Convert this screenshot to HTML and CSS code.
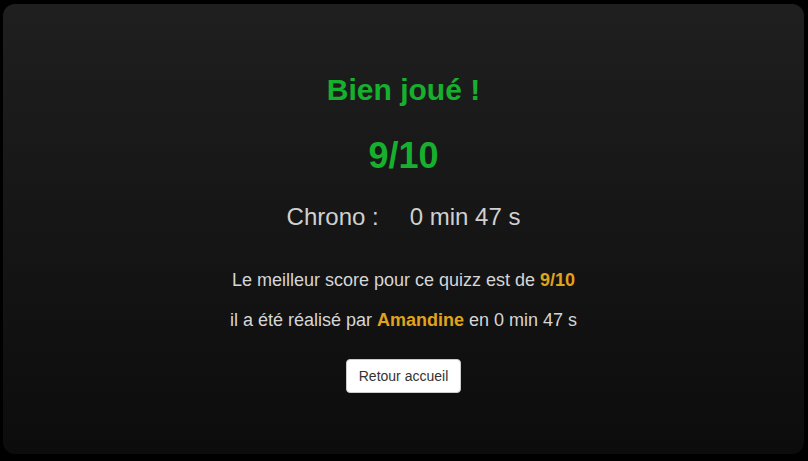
FILE: index.html
```html
<!DOCTYPE html>
<html lang="fr">
<head>
<meta charset="utf-8">
<title>Résultat</title>
<link rel="stylesheet" href="styles.css">
</head>
<body>
<main class="card">
  <h1 class="title">Bien joué !</h1>
  <p class="score">9/10</p>
  <p class="chrono"><span class="chrono-label">Chrono :</span><span>0 min 47 s</span></p>
  <p class="info">Le meilleur score pour ce quizz est de <strong class="hl">9/10</strong></p>
  <p class="info">il a été réalisé par <strong class="hl">Amandine</strong> en 0 min 47 s</p>
  <button class="btn" type="button">Retour accueil</button>
</main>
</body>
</html>
```
FILE: styles.css
```css
html, body {
  margin: 0;
  background: #000;
}
body {
  padding: 4px 4px 7px 3px;
  font-family: "Liberation Sans", Arial, sans-serif;
}
.card {
  height: 450px;
  box-sizing: border-box;
  border-radius: 12px;
  background: linear-gradient(180deg, #1f1f1f 0%, #0c0c0c 100%);
  display: flex;
  flex-direction: column;
  align-items: center;
  padding-top: 69px;
  color: #d6d6d6;
}
.title {
  margin: 0;
  font-size: 30px;
  line-height: 34px;
  font-weight: bold;
  color: #17b02e;
}
.score {
  margin: 29px 0 0;
  font-size: 36px;
  line-height: 40px;
  font-weight: bold;
  color: #17b02e;
}
.chrono {
  margin: 27px 0 0;
  font-size: 24px;
  line-height: 28px;
  color: #d0d0d0;
}
.chrono-label {
  margin-right: 31px;
}
.info {
  margin: 0;
  font-size: 18px;
  line-height: 22px;
  color: #d6d6d6;
}
.chrono + .info {
  margin-top: 38px;
}
.info + .info {
  margin-top: 18px;
}
.hl {
  color: #e0a31b;
}
.btn {
  margin-top: 28px;
  width: 115px;
  height: 34px;
  background: #fff;
  border: 1px solid #ccc;
  border-radius: 4px;
  font-family: "Liberation Sans", Arial, sans-serif;
  font-size: 14px;
  color: #333;
  padding: 0;
}
```
